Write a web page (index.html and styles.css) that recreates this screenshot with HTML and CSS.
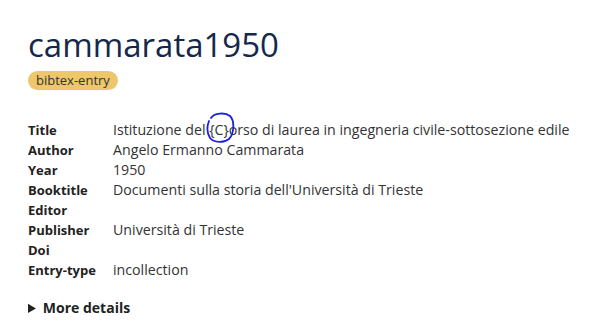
FILE: index.html
```html
<!DOCTYPE html>
<html lang="en">
  <head>
    <meta charset="UTF-8" />
    <title>cammarata1950</title>
    <link rel="stylesheet" href="styles.css">
  </head>
  <body>
    <div class="entry">
      <h1>cammarata1950</h1>
      <span class="badge">bibtex-entry</span>

      <dl class="fields">
        <dt>Title</dt>
        <dd class="title-value">Istituzione del <span class="mark">{C}<svg class="circle" viewBox="0 0 30 32" width="30" height="32"><path d="M6 6 C9 1 20 0 25 4 C30 9 29 22 24 27 C19 31 9 31 5 26 C2 21 2 14 4 9" fill="none" stroke="#1a22e0" stroke-width="1.8" stroke-linecap="round"/></svg></span>orso di laurea in ingegneria civile-sottosezione edile</dd>
        <dt>Author</dt>
        <dd>Angelo Ermanno Cammarata</dd>
        <dt>Year</dt>
        <dd>1950</dd>
        <dt>Booktitle</dt>
        <dd>Documenti sulla storia dell'Università di Trieste</dd>
        <dt>Editor</dt>
        <dd></dd>
        <dt>Publisher</dt>
        <dd>Università di Trieste</dd>
        <dt>Doi</dt>
        <dd></dd>
        <dt>Entry-type</dt>
        <dd>incollection</dd>
      </dl>

      <details>
        <summary>More details</summary>
      </details>
    </div>
  </body>
</html>
```

FILE: styles.css
```css
body {
  margin: 0;
  background: #fff;
  font-family: "Open Sans", "Noto Sans", sans-serif;
  color: #222;
}
.entry {
  padding: 22px 10px 22px 28px;
}
h1 {
  margin: 0;
  font-size: 33px;
  font-weight: 400;
  color: #14284b;
  line-height: 46px;
}
.badge {
  display: inline-block;
  margin-top: 2px;
  padding: 0 8px;
  background: #eec76b;
  border-radius: 10px;
  font-size: 13px;
  line-height: 19px;
  color: #333;
}
.fields {
  display: grid;
  grid-template-columns: 85px 1fr;
  margin: 30px 0 0;
  line-height: 20px;
}
dt {
  font-size: 13px;
  font-weight: 700;
  color: #222;
}
dd {
  margin: 0;
  min-height: 20px;
  font-size: 14.2px;
  color: #333;
}
.title-value {
  white-space: nowrap;
}
.mark {
  position: relative;
}
.circle {
  position: absolute;
  left: -4px;
  top: -8px;
}
details {
  margin-top: 18px;
  font-size: 14px;
  font-weight: 700;
  color: #222;
}
summary {
  cursor: pointer;
}
```
